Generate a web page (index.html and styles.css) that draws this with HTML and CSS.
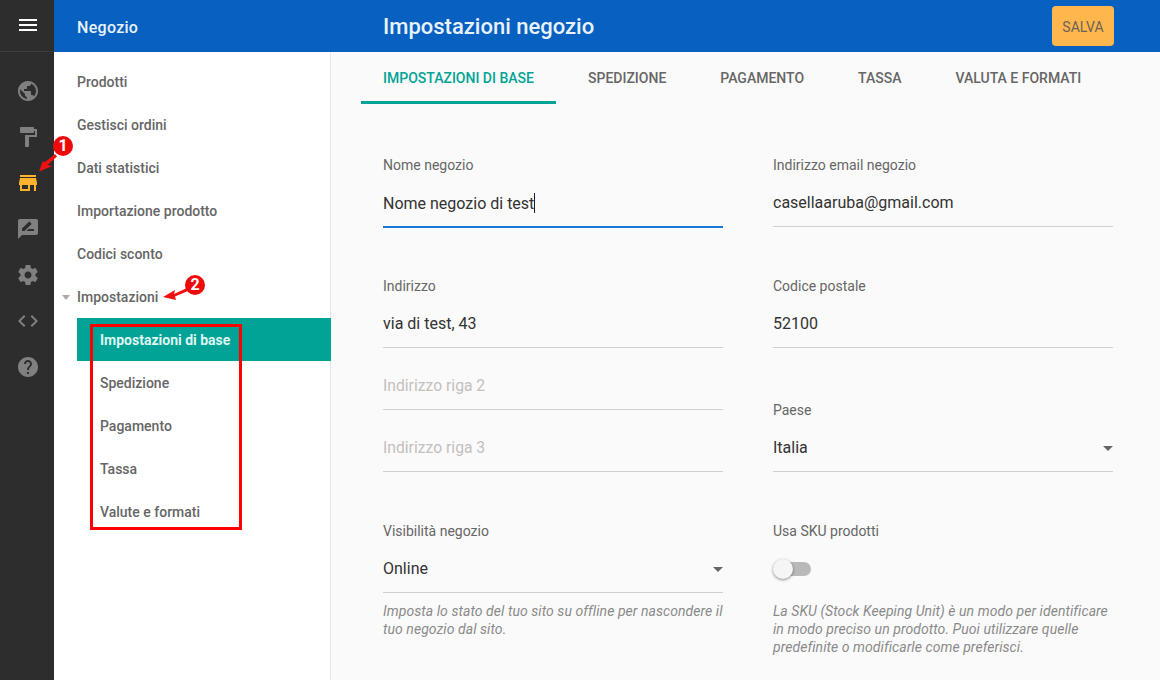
FILE: index.html
```html
<!DOCTYPE html>
<html lang="it">
<head>
<meta charset="utf-8">
<title>Impostazioni negozio</title>
<link rel="stylesheet" href="styles.css">
</head>
<body>
<div class="app">
  <nav class="rail">
    <div class="rail-top"><span class="burger"><i></i><i></i><i></i></span></div>
    <div class="rail-icons">
      <svg viewBox="0 0 24 24"><path d="M12 2C6.48 2 2 6.48 2 12s4.48 10 10 10 10-4.48 10-10S17.52 2 12 2zm-1 17.93c-3.95-.49-7-3.85-7-7.93 0-.62.08-1.21.21-1.79L9 15v1c0 1.1.9 2 2 2v1.93zm6.9-2.54c-.26-.81-1-1.39-1.9-1.39h-1v-3c0-.55-.45-1-1-1H8v-2h2c.55 0 1-.45 1-1V7h2c1.1 0 2-.9 2-2v-.41c2.93 1.19 5 4.06 5 7.41 0 2.08-.8 3.97-2.1 5.39z"/></svg>
      <svg viewBox="0 0 24 24"><path d="M18 4V3c0-.55-.45-1-1-1H5c-.55 0-1 .45-1 1v4c0 .55.45 1 1 1h12c.55 0 1-.45 1-1V6h1v4H9v11c0 .55.45 1 1 1h2c.55 0 1-.45 1-1v-9h8V4h-3z"/></svg>
      <svg class="active" viewBox="0 0 24 24"><path d="M20 4H4v2h16V4zm1 10v-2l-1-5H4l-1 5v2h1v6h10v-6h4v6h2v-6h1zm-9 4H6v-4h6v4z"/></svg>
      <svg viewBox="0 0 24 24"><path d="M20 2H4c-1.1 0-1.99.9-1.99 2L2 22l4-4h14c1.1 0 2-.9 2-2V4c0-1.1-.9-2-2-2zM6 14v-2.47l6.88-6.88c.2-.2.51-.2.71 0l1.77 1.77c.2.2.2.51 0 .71L8.47 14H6zm12 0h-7.5l2-2H18v2z"/></svg>
      <svg viewBox="0 0 24 24"><path d="M19.43 12.98c.04-.32.07-.64.07-.98s-.03-.66-.07-.98l2.11-1.65c.19-.15.24-.42.12-.64l-2-3.46c-.12-.22-.39-.3-.61-.22l-2.49 1c-.52-.4-1.08-.73-1.69-.98l-.38-2.65C14.46 2.18 14.25 2 14 2h-4c-.25 0-.46.18-.49.42l-.38 2.65c-.61.25-1.17.59-1.69.98l-2.49-1c-.23-.09-.49 0-.61.22l-2 3.46c-.13.22-.07.49.12.64l2.11 1.65c-.04.32-.07.65-.07.98s.03.66.07.98l-2.11 1.65c-.19.15-.24.42-.12.64l2 3.46c.12.22.39.3.61.22l2.49-1c.52.4 1.08.73 1.69.98l.38 2.65c.03.24.24.42.49.42h4c.25 0 .46-.18.49-.42l.38-2.65c.61-.25 1.17-.59 1.69-.98l2.49 1c.23.09.49 0 .61-.22l2-3.46c.12-.22.07-.49-.12-.64l-2.11-1.65zM12 15.5c-1.93 0-3.5-1.57-3.5-3.5s1.57-3.5 3.5-3.5 3.5 1.57 3.5 3.5-1.57 3.5-3.5 3.5z"/></svg>
      <svg viewBox="0 0 24 24"><path d="M9.4 16.6L4.8 12l4.6-4.6L8 6l-6 6 6 6 1.4-1.4zm5.2 0l4.6-4.6-4.6-4.6L16 6l6 6-6 6-1.4-1.4z"/></svg>
      <svg viewBox="0 0 24 24"><path d="M12 2C6.48 2 2 6.48 2 12s4.48 10 10 10 10-4.48 10-10S17.52 2 12 2zm1 17h-2v-2h2v2zm2.07-7.75l-.9.92C13.45 12.9 13 13.5 13 15h-2v-.5c0-1.1.45-2.1 1.17-2.83l1.24-1.26c.37-.36.59-.86.59-1.41 0-1.1-.9-2-2-2s-2 .9-2 2H8c0-2.21 1.79-4 4-4s4 1.79 4 4c0 .88-.36 1.68-.93 2.25z"/></svg>
    </div>
  </nav>
  <div class="workspace">
    <header class="topbar">
      <div class="section-name">Negozio</div>
      <h1 class="page-title">Impostazioni negozio</h1>
      <button class="save">SALVA</button>
    </header>
    <div class="body">
      <aside class="sidebar">
        <a class="item">Prodotti</a>
        <a class="item">Gestisci ordini</a>
        <a class="item">Dati statistici</a>
        <a class="item">Importazione prodotto</a>
        <a class="item">Codici sconto</a>
        <a class="item expanded"><span class="tri"></span>Impostazioni</a>
        <a class="item sub selected">Impostazioni di base</a>
        <a class="item sub">Spedizione</a>
        <a class="item sub">Pagamento</a>
        <a class="item sub">Tassa</a>
        <a class="item sub">Valute e formati</a>
      </aside>
      <main class="main">
        <div class="tabs">
          <a class="tab current">IMPOSTAZIONI DI BASE</a>
          <a class="tab">SPEDIZIONE</a>
          <a class="tab">PAGAMENTO</a>
          <a class="tab">TASSA</a>
          <a class="tab">VALUTA E FORMATI</a>
        </div>
        <div class="form">
          <div class="field row-a">
            <label class="label">Nome negozio</label>
            <div class="input focused"><span>Nome negozio di test</span><span class="caret"></span></div>
          </div>
          <div class="field row-a">
            <label class="label">Indirizzo email negozio</label>
            <div class="input"><span>casellaaruba@gmail.com</span></div>
          </div>
          <div class="field row-b">
            <label class="label">Indirizzo</label>
            <div class="input"><span>via di test, 43</span></div>
          </div>
          <div class="field row-b">
            <label class="label">Codice postale</label>
            <div class="input"><span>52100</span></div>
          </div>
          <div class="stack row-c">
            <div class="input ph tall"><span>Indirizzo riga 2</span></div>
            <div class="input ph tall"><span>Indirizzo riga 3</span></div>
          </div>
          <div class="field bottom row-c">
            <label class="label">Paese</label>
            <div class="input select"><span>Italia</span><span class="arrow"></span></div>
          </div>
          <div class="field">
            <label class="label">Visibilità negozio</label>
            <div class="input select"><span>Online</span><span class="arrow"></span></div>
            <p class="help">Imposta lo stato del tuo sito su offline per nascondere il tuo negozio dal sito.</p>
          </div>
          <div class="field">
            <label class="label">Usa SKU prodotti</label>
            <div class="switch-row"><span class="switch"><span class="knob"></span></span></div>
            <p class="help">La SKU (Stock Keeping Unit) è un modo per identificare in modo preciso un prodotto. Puoi utilizzare quelle predefinite o modificarle come preferisci.</p>
          </div>
        </div>
      </main>
    </div>
  </div>
</div>

<div class="redbox"></div>
<svg class="arrow-mark mark-one" viewBox="0 0 26 26">
  <path d="M3 21.5 L16.5 16 L11.5 15 L21 6.5 L19 4 L9 12 L6.5 11.5 Z"/>
</svg>
<svg class="arrow-mark mark-two" viewBox="0 0 32 19">
  <path d="M1 13 L13 6 L12 10 L25 4 L26 7 L13 12.5 L14 16 Z"/>
</svg>
<span class="badge badge-one">1</span>
<span class="badge badge-two">2</span>
</body>
</html>
```
FILE: styles.css
```css
* { box-sizing: border-box; }
html, body { margin: 0; padding: 0; height: 100%; overflow: hidden; }
body { font-family: Roboto, "Liberation Sans", sans-serif; color: #555; position: relative; background: #fafafa; }

.app { display: flex; width: 1160px; height: 680px; }

.rail { width: 54px; flex: none; background: #2d2d2d; }
.rail-top { height: 52px; display: flex; align-items: center; justify-content: center; border-bottom: 1px solid #3d3d3d; }
.burger { display: flex; flex-direction: column; gap: 3px; width: 18px; margin-left: 2px; margin-top: -1px; }
.burger i { display: block; height: 2px; background: #fff; }
.rail-icons { display: flex; flex-direction: column; align-items: center; gap: 22px; padding-top: 27px; margin-left: 2px; }
.rail-icons svg { width: 24px; height: 24px; fill: #808080; display: block; }
.rail-icons svg.active { fill: #ffb32c; }

.workspace { flex: 1; display: flex; flex-direction: column; min-width: 0; }
.topbar { height: 52px; flex: none; background: #0860c0; display: flex; align-items: center; color: #fff; }
.section-name { width: 277px; padding-left: 23px; padding-top: 2px; font-size: 16px; font-weight: 500; letter-spacing: .3px; color: #e8f2fc; }
.page-title { margin: 0 0 0 52px; flex: 1; font-size: 22px; font-weight: 500; color: #e8f2fc; }
.save { width: 62px; height: 40px; margin-right: 46px; border: 0; border-radius: 4px; background: #ffb74d; color: #6b6259; font: 400 14px Roboto, sans-serif; padding: 2px 0 0; }

.body { flex: 1; display: flex; min-height: 0; }

.sidebar { width: 277px; flex: none; background: #fff; border-right: 1px solid #e6e6e6; padding-top: 8px; }
.item { display: flex; align-items: center; height: 43px; padding-left: 23px; font-size: 14px; font-weight: 500; color: #666; position: relative; }
.tri { position: absolute; left: 8px; top: 20px; width: 0; height: 0; border-left: 4.5px solid transparent; border-right: 4.5px solid transparent; border-top: 5px solid #aaa; }
.sub { margin-left: 23px; }
.selected { background: #00a396; color: #dff5f2; font-weight: 700; margin-right: -1px; }

.main { flex: 1; background: #fafafa; min-width: 0; }
.tabs { display: flex; height: 52px; padding-left: 30px; gap: 10px; }
.tab { padding: 0 22px; height: 52px; line-height: 52px; font-size: 14px; font-weight: 500; color: #666; border-bottom: 3px solid transparent; }
.tab.current { color: #00a396; border-bottom-color: #00a396; }

.form { display: grid; grid-template-columns: 340px 340px; column-gap: 50px; padding: 51px 0 0 52px; }
.field { display: flex; flex-direction: column; }
.row-a { margin-bottom: 48px; }
.row-b { margin-bottom: 15px; }
.row-c { margin-bottom: 49px; }
.field.bottom { justify-content: flex-end; }
.label { height: 20px; line-height: 20px; font-size: 14px; color: #666; }
.input { margin-top: 5px; height: 47px; padding-bottom: 1px; display: flex; align-items: center; justify-content: flex-start; font-size: 16px; color: #333; border-bottom: 1px solid #d0d0d0; }
.input.focused { height: 48px; padding-bottom: 0; border-bottom: 2px solid #1976d2; }
.caret { width: 1px; height: 20px; background: #222; }
.stack { display: flex; flex-direction: column; gap: 15px; }
.input.tall { margin-top: 0; height: 47px; }
.ph { color: #c4c0bd; font-size: 15.7px; }
.select { justify-content: space-between; }
.arrow { width: 0; height: 0; border-left: 5px solid transparent; border-right: 5px solid transparent; border-top: 5px solid #666; margin-top: 2px; }
.help { margin: 9px 0 0; font-size: 14px; line-height: 18px; font-style: italic; color: #8a8a8a; letter-spacing: .06px; }
.switch-row { margin-top: 5px; height: 47px; padding-bottom: 1px; display: flex; align-items: center; }
.switch { position: relative; width: 36px; height: 14px; margin-left: 2px; border-radius: 7px; background: #b9b9b9; }
.knob { position: absolute; left: -2px; top: -3px; width: 20px; height: 20px; border-radius: 50%; background: #f5f5f5; box-shadow: 0 1px 3px rgba(0,0,0,.45); }

.redbox { position: absolute; left: 90px; top: 324px; width: 152px; height: 206px; border: 3px solid #f00; }
.arrow-mark { position: absolute; fill: #f01010; }
.mark-one { left: 36px; top: 150px; width: 26px; height: 26px; }
.mark-two { left: 162px; top: 284px; width: 32px; height: 19px; }
.badge { position: absolute; width: 20px; height: 20px; border-radius: 50%; background: #ee0a0a; color: #fff; font: 700 16px/20px Roboto, sans-serif; text-align: center; }
.badge-one { left: 53px; top: 136px; }
.badge-two { left: 185px; top: 275px; }
```
